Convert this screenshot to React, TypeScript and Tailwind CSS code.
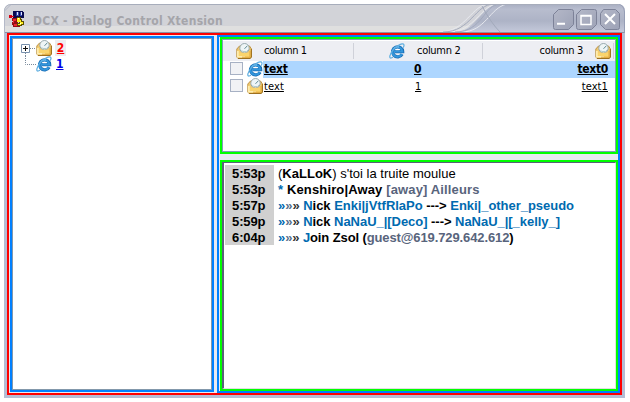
import React from "react";

function MailIcon() {
  return (
    <svg width="16" height="16" viewBox="0 0 16 16" className="block shrink-0">
      <path d="M.800 6 3.500 3h10l2 3v8l-1.300 1.500H2L.800 14Z" fill="#efc873" stroke="#b98d3c" strokeWidth=".9" />
      <circle cx="8.500" cy="5.200" r="4.700" fill="#eef5f6" stroke="#8fa3a8" strokeWidth=".9" />
      <path d="m8.500 5.800 2.800-3" stroke="#5f8a94" strokeWidth="1" />
      <path d="M5.500 7.500 7 8.500h3.500L12 7" fill="none" stroke="#b5cccc" />
      <path d="M1 7.500h2.400v2.300h10V7.500H15V14l-1 1H2l-1-1Z" fill="#fad46c" />
      <path d="M1.900 8v5.800H9" stroke="#fff3c4" strokeWidth="1.300" fill="none" />
      <path d="M14 8v6.200H6" stroke="#e5a93c" fill="none" />
      <path d="M15.300 6v8.300L14 15.400H2" stroke="#9a6c1a" strokeWidth="1" fill="none" />
    </svg>
  );
}

function BrowserIcon() {
  return (
    <svg width="16" height="16" viewBox="0 0 16 16" className="block shrink-0">
      <path d="M13.100 11.200A5.100 5 0 1 1 13.700 8.700H5.500" fill="none" stroke="#1c6fb6" strokeWidth="3.200" />
      <path d="M12.800 11A4.900 4.800 0 1 1 13.300 8.500H5" fill="none" stroke="#3296dc" strokeWidth="2" />
      <path d="M4.600 5.800C5.800 4.200 8 3.500 10 4" fill="none" stroke="#86d0f8" strokeWidth="1" />
      <path d="M6.500 6.700h4" stroke="#fff" strokeWidth="1" />
      <path d="M4 14.300C1 16 .2 14.500 1.200 12 2.500 8.500 6 4.500 9.500 2.300 12 .600 14.500.300 14.900 1.600c.300.900-.100 2-.700 3" fill="none" stroke="#5eaee0" strokeWidth="1.200" />
    </svg>
  );
}

function AppIcon() {
  return (
    <svg width="16" height="16" viewBox="0 0 16 16" shapeRendering="crispEdges" className="block">
      <path d="M4 0h10v1h1v6H4Z" fill="#080a50" />
      <path d="M7 1h3v4H7zM11 1h2v4h-2z" fill="#3549a7" />
      <path d="M8 1h1v3H8zM12 1h1v3h-1z" fill="#dce3ff" />
      <path d="M0 4h3v3H0zM3 5h2v1H3z" fill="#d90012" />
      <path d="M3 7h5v2h1v5h2v2H4v-2H3v-3h1v-1H3z" fill="#930d14" />
      <path d="M4 8h3v2H5v3h3v2H5v-3H4z" fill="#ef2630" />
      <path d="M8 6h4v2h1v2h2v4h-2v1H8v-3h2v-2H8z" fill="#5a4c00" />
      <path d="M8 7h3v2h1v2h2v2h-2v1H9v-1h2v-2H8z" fill="#ffef20" />
      <path d="M9 7h1v1H9zM11 12h1v1h-1z" fill="#fff" />
    </svg>
  );
}

function WindowButtons() {
  return (
    <svg width="68" height="22" viewBox="0 0 68 22" className="block">
      <defs>
        <linearGradient id="button" x1="0" y1="0" x2="1" y2="1">
          <stop stopColor="#b4b8c8" />
          <stop offset="1" stopColor="#9da2b6" />
        </linearGradient>
      </defs>
      <g fill="url(#button)" stroke="#7d8298">
        <path d="M5.500.500h13q2 0 2 2v13l-5 5h-13q-2 0-2-2v-13Z" />
        <path d="M28.500.500h13q2 0 2 2v13l-5 5h-13q-2 0-2-2v-13Z" />
        <path d="M50.500.500h12l4 4v14q0 2-2 2h-12l-5-5v-11Z" />
      </g>
      <path d="M4 14.800h8" fill="none" stroke="#fff" strokeWidth="2" />
      <path d="M28 7h10v8.500H28ZM27.300 6.500h11.400" fill="none" stroke="#fff" strokeWidth="1.500" />
      <path d="m52 5 10 10m0-10-10 10" fill="none" stroke="#fff" strokeWidth="2" />
    </svg>
  );
}

function TitleBar() {
  return (
    <div className="relative h-[29px] shrink-0 overflow-hidden rounded-tl-[7px] rounded-tr-[7px] bg-[#d2d3d8]">
      <svg width="621" height="29" viewBox="0 0 621 29" className="absolute inset-0">
        <defs>
          <linearGradient id="caption" x1="0" y1="0" x2="0" y2="1">
            <stop stopColor="#a8aec2" />
            <stop offset=".18" stopColor="#b8bdce" />
            <stop offset=".58" stopColor="#adb3c6" />
            <stop offset="1" stopColor="#c6cbdc" />
          </linearGradient>
        </defs>
        <path d="M0 22h621v7H0Z" fill="#dfdfdf" />
        <path d="M495 0h126v29H451c22-3 28-29 44-29" fill="url(#caption)" />
        <path d="M435 28c28 0 32-28 51-28M444 28c28 0 32-28 51-28M457 28c25 0 28-24 46-28h118" stroke="#e6e8ee" fill="none" />
        <path d="M439 28c28 0 32-28 51-28M451 28c28 0 29-28 45-28M478 2q9 17 18 26" stroke="#a2a9bb" fill="none" />
        <path d="M0 28.500h621" stroke="#8d91a5" />
        <path d="M0 7Q1 .500 7 .500h607" stroke="#a7adbb" fill="none" />
        <path d="M.500 29V7L7 .500" stroke="#b4b9c8" fill="none" />
        <path d="M614 0q6 1 6.500 8v21" stroke="#959db4" fill="none" />
      </svg>
      <div className="relative flex h-full items-center">
        <div className="ml-[5px] mt-px"><AppIcon /></div>
        <div className="ml-[8px] mt-[4px] whitespace-nowrap font-['DejaVu_Sans_Condensed','DejaVu_Sans',sans-serif] text-[12px] font-bold leading-[16px] tracking-[0.28px] text-[#a5a5aa]">DCX - Dialog Control Xtension</div>
        <div className="ml-auto mr-[4px] mt-[2px]"><WindowButtons /></div>
      </div>
    </div>
  );
}

function Tree() {
  return (
    <div className="w-[204px] shrink-0 border-2 border-[#0080ff] bg-white">
      <div className="h-full border border-[#8398ab] p-px font-['DejaVu_Sans_Condensed','DejaVu_Sans',sans-serif] text-[12px] font-bold leading-[16px]">
        <div className="ml-[7px] flex h-[16px]">
          <svg width="15" height="16" viewBox="0 0 15 16">
            <path d="M9 8.500h6M4.500 13v3" stroke="#78899b" strokeDasharray="1 1" />
            <path d="M.500 4.500h8v8h-8Z" fill="#fff" stroke="#7890ac" />
            <path d="M2 8.500h5M4.500 6v5" stroke="#111" />
          </svg>
          <MailIcon />
          <span className="ml-[3px] w-[11px] bg-[#ededf1] text-center text-[#f00] underline">2</span>
        </div>
        <div className="ml-[7px] flex h-[16px]">
          <svg width="15" height="16" viewBox="0 0 15 16"><path d="M4.500 0v8.500H15" fill="none" stroke="#78899b" strokeDasharray="1 1" /></svg>
          <BrowserIcon />
          <span className="ml-[4px] text-[#0000e8] underline">1</span>
        </div>
      </div>
    </div>
  );
}

function ListView() {
  return (
    <div className="h-[117px] shrink-0 border-2 border-[#0f0] bg-white font-['DejaVu_Sans_Condensed','DejaVu_Sans',sans-serif] text-[11px] leading-[16px] text-black">
      <div className="h-full border border-[#7f9db9] pt-px">
        <div className="flex h-[20px] items-center bg-[#edeef3] pl-[13px]">
          <div className="flex h-[16px] w-[118px] border-r border-[#cfd1d9]">
            <MailIcon /><span className="ml-[12px] whitespace-nowrap tracking-[-0.4px]">column 1</span>
          </div>
          <div className="ml-[35px] flex h-[16px] w-[94px] border-r border-[#cfd1d9]"><BrowserIcon /><span className="ml-[12px] whitespace-nowrap tracking-[-0.3px]">column 2</span></div>
          <div className="ml-auto flex h-[16px]"><span className="mr-[12px] whitespace-nowrap tracking-[-0.3px]">column 3</span><MailIcon /><span className="ml-[2px] mr-px h-[16px] w-px bg-[#cfd1d9]" /></div>
        </div>
        <div className="flex h-[17px] pl-[7px]">
          <Checkbox />
          <span className="ml-[4px]"><BrowserIcon /></span>
          <div className="flex min-w-0 flex-1 bg-[#add6ff] font-bold">
            <span className="w-[151px] pl-px text-[12px] tracking-[-0.2px]"><span className="underline">text</span></span>
            <span className="text-[12px] underline">0</span>
            <span className="ml-auto mr-[7px] text-[12px] tracking-[-0.3px] underline">text0</span>
          </div>
        </div>
        <div className="flex h-[17px] pl-[7px]">
          <Checkbox />
          <span className="ml-[4px]"><MailIcon /></span>
          <span className="w-[152px] pl-px pt-px tracking-[0.1px]"><span className="underline">text</span></span>
          <span className="pt-px underline">1</span>
          <span className="ml-auto mr-[7px] pt-px tracking-[0.1px] underline">text1</span>
        </div>
      </div>
    </div>
  );
}

function Checkbox() {
  return <span className="mt-px h-[13px] w-[13px] shrink-0 border border-[#a7b1c4] bg-[#f1f2f5]" />;
}

function ChatRow({ time, children }: { time: string; children: React.ReactNode }) {
  return (
    <div className="flex h-[16px] whitespace-pre">
      <span className="mr-[4px] w-[49px] shrink-0 bg-[#d0d0d0] pl-[7px] font-bold tracking-[-0.1px]">{time}</span>
      <div>{children}</div>
    </div>
  );
}

function Arrows() {
  return <><span className="text-[#006ab0]">»</span><span className="text-[#58708c]">»</span><span className="text-[#333]">»</span></>;
}

function Chat() {
  return (
    <div className="min-h-0 flex-1 border-2 border-[#0f0] bg-white">
      <div className="h-full border-b border-l-2 border-r border-t border-b-[#e0e0e0] border-l-[#59617a] border-r-[#e0e0e0] border-t-[#59617a] bg-white pl-px pt-[2px] font-['Liberation_Sans',Arial,sans-serif] text-[13px] leading-[17px] text-black">
        <ChatRow time="5:53p"><span className="tracking-[0.01px]">(<b>KaLLoK</b>) s'toi la truite moulue</span></ChatRow>
        <ChatRow time="5:53p"><span className="font-bold tracking-[0.14px]"><span className="text-[#006ab0]">*</span> Kenshiro|Away <span className="text-[#58647c]">[away] Ailleurs</span></span></ChatRow>
        <ChatRow time="5:57p"><span className="font-bold tracking-[-0.03px]"><Arrows /> <span className="text-[#006ab0]">N</span>ick <span className="text-[#006ab0]">Enki|jVtfRlaPo</span> ---&gt; <span className="text-[#006ab0]">Enki|_other_pseudo</span></span></ChatRow>
        <ChatRow time="5:59p"><span className="font-bold tracking-[-0.04px]"><Arrows /> <span className="text-[#006ab0]">N</span>ick <span className="text-[#006ab0]">NaNaU_|[Deco]</span> ---&gt; <span className="text-[#006ab0]">NaNaU_|[_kelly_]</span></span></ChatRow>
        <ChatRow time="6:04p"><span className="font-bold tracking-[-0.11px]"><Arrows /> <span className="text-[#006ab0]">J</span>oin Zsol (<span className="text-[#58647c]">guest@619.729.642.612</span>)</span></ChatRow>
      </div>
    </div>
  );
}

export default function App() {
  return (
    <main className="h-[402px] w-[630px] overflow-hidden bg-white pl-[4px] pt-[4px]">
      <div className="flex h-[394px] w-[621px] flex-col rounded-t-[7px] bg-[#b5bdd4]">
        <TitleBar />
        <div className="ml-[3px] flex h-[362px] w-[615px] border-2 border-[#f00] bg-[#e8eaf1] pl-px">
          <div className="flex pb-px pt-px"><Tree /></div>
          <div className="ml-[3px] flex min-w-0 flex-1 flex-col border-2 border-[#0080ff] pl-px">
            <ListView />
            <div className="h-[6px] shrink-0" />
            <Chat />
          </div>
        </div>
      </div>
    </main>
  );
}
